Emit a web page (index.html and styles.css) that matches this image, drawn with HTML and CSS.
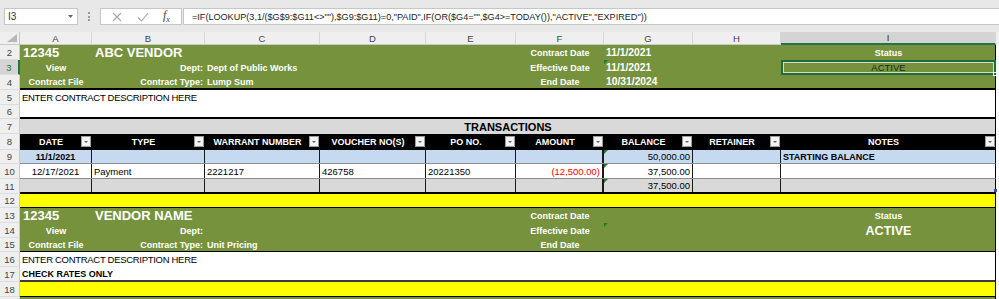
FILE: index.html
```html
<!DOCTYPE html>
<html lang="en">
<head>
    <meta charset="UTF-8">
    <title>Vendor Contracts</title>
    <link rel="stylesheet" href="styles.css">
</head>
<body>
    <div class="fbar">
        <div class="namebox">
            <span>I3</span>
            <svg width="5" height="3" viewBox="0 0 5 3"><path d="M0 0H5L2.5 3Z" fill="#666"/></svg>
        </div>
        <div class="grip"><i></i><i></i><i></i></div>
        <div class="fxbox">
            <svg width="10" height="10" viewBox="0 0 10 10"><path d="M1 1L9 9M9 1L1 9" stroke="#a3a3a3" stroke-width="1.1"/></svg>
            <svg width="12" height="10" viewBox="0 0 12 10"><path d="M1 5.5L4.5 9L11 1" stroke="#a3a3a3" stroke-width="1.1" fill="none"/></svg>
            <span class="fx"><i>f</i><sub>x</sub></span>
        </div>
        <div class="formula">=IF(LOOKUP(3,1/($G$9:$G11&lt;&gt;""),$G9:$G11)=0,"PAID",IF(OR($G4="",$G4&gt;=TODAY()),"ACTIVE","EXPIRED"))</div>
    </div>

    <div class="sheet">
        <div class="row colhead">
            <div class="corner"><span class="corner-tri"></span></div>
            <div class="cells">
                <div class="ch">A</div>
                <div class="ch">B</div>
                <div class="ch">C</div>
                <div class="ch">D</div>
                <div class="ch">E</div>
                <div class="ch">F</div>
                <div class="ch">G</div>
                <div class="ch">H</div>
                <div class="ch sel">I</div>
            </div>
        </div>

        <!-- contract 1 -->
        <div class="row h15">
            <div class="rh">2</div>
            <div class="cells green">
                <div class="c big">12345</div>
                <div class="c big">ABC VENDOR</div>
                <div class="c"></div>
                <div class="c"></div>
                <div class="c"></div>
                <div class="c ctr">Contract Date</div>
                <div class="c val">11/1/2021</div>
                <div class="c"></div>
                <div class="c ctr">Status</div>
            </div>
        </div>
        <div class="row h15">
            <div class="rh sel">3</div>
            <div class="cells green">
                <div class="c ctr">View</div>
                <div class="c r">Dept:</div>
                <div class="c">Dept of Public Works</div>
                <div class="c"></div>
                <div class="c"></div>
                <div class="c ctr">Effective Date</div>
                <div class="c val"><span class="flag"></span>11/1/2021</div>
                <div class="c"></div>
                <div class="c ctr selected">ACTIVE<span class="handle"></span></div>
            </div>
        </div>
        <div class="row h15">
            <div class="rh">4</div>
            <div class="cells green bottom2">
                <div class="c ctr">Contract File</div>
                <div class="c r">Contract Type:</div>
                <div class="c">Lump Sum</div>
                <div class="c"></div>
                <div class="c"></div>
                <div class="c ctr">End Date</div>
                <div class="c val">10/31/2024</div>
                <div class="c"></div>
                <div class="c"></div>
            </div>
        </div>
        <div class="row h15">
            <div class="rh">5</div>
            <div class="cells plain">
                <div class="c full desc">ENTER CONTRACT DESCRIPTION HERE</div>
            </div>
        </div>
        <div class="row h14">
            <div class="rh">6</div>
            <div class="cells plain bottom2"></div>
        </div>

        <!-- transactions -->
        <div class="row h15">
            <div class="rh">7</div>
            <div class="cells gray">
                <div class="c full ctr title">TRANSACTIONS</div>
            </div>
        </div>
        <div class="row h16">
            <div class="rh">8</div>
            <div class="cells thead">
                <div class="c ctr">DATE<span class="fbtn"></span></div>
                <div class="c ctr">TYPE<span class="fbtn"></span></div>
                <div class="c ctr">WARRANT NUMBER<span class="fbtn"></span></div>
                <div class="c ctr">VOUCHER NO(S)<span class="fbtn"></span></div>
                <div class="c ctr">PO NO.<span class="fbtn"></span></div>
                <div class="c ctr">AMOUNT<span class="fbtn"></span></div>
                <div class="c ctr">BALANCE<span class="fbtn"></span></div>
                <div class="c ctr">RETAINER<span class="fbtn"></span></div>
                <div class="c ctr">NOTES<span class="fbtn"></span></div>
            </div>
        </div>
        <div class="row h14">
            <div class="rh">9</div>
            <div class="cells tbl blue">
                <div class="c ctr strong">11/1/2021</div>
                <div class="c"></div>
                <div class="c"></div>
                <div class="c"></div>
                <div class="c"></div>
                <div class="c f"></div>
                <div class="c r"><span class="flag"></span>50,000.00</div>
                <div class="c"></div>
                <div class="c strong">STARTING BALANCE</div>
            </div>
        </div>
        <div class="row h15">
            <div class="rh">10</div>
            <div class="cells tbl">
                <div class="c ctr">12/17/2021</div>
                <div class="c">Payment</div>
                <div class="c">2221217</div>
                <div class="c">426758</div>
                <div class="c">20221350</div>
                <div class="c f r neg">(12,500.00)</div>
                <div class="c r"><span class="flag"></span>37,500.00</div>
                <div class="c"></div>
                <div class="c"></div>
            </div>
        </div>
        <div class="row h15">
            <div class="rh">11</div>
            <div class="cells tbl gray last">
                <div class="c"></div>
                <div class="c"></div>
                <div class="c"></div>
                <div class="c"></div>
                <div class="c"></div>
                <div class="c f"></div>
                <div class="c r"><span class="flag"></span>37,500.00</div>
                <div class="c"></div>
                <div class="c"><span class="resize"></span></div>
            </div>
        </div>
        <div class="row h14">
            <div class="rh">12</div>
            <div class="cells yellow"></div>
        </div>

        <!-- contract 2 -->
        <div class="row h15">
            <div class="rh">13</div>
            <div class="cells green">
                <div class="c big">12345</div>
                <div class="c big">VENDOR NAME</div>
                <div class="c"></div>
                <div class="c"></div>
                <div class="c"></div>
                <div class="c ctr">Contract Date</div>
                <div class="c val"></div>
                <div class="c"></div>
                <div class="c ctr">Status</div>
            </div>
        </div>
        <div class="row h15">
            <div class="rh">14</div>
            <div class="cells green">
                <div class="c ctr">View</div>
                <div class="c r">Dept:</div>
                <div class="c"></div>
                <div class="c"></div>
                <div class="c"></div>
                <div class="c ctr">Effective Date</div>
                <div class="c val"><span class="flag"></span></div>
                <div class="c"></div>
                <div class="c ctr status-big">ACTIVE</div>
            </div>
        </div>
        <div class="row h14">
            <div class="rh">15</div>
            <div class="cells green bottom1">
                <div class="c ctr">Contract File</div>
                <div class="c r">Contract Type:</div>
                <div class="c">Unit Pricing</div>
                <div class="c"></div>
                <div class="c"></div>
                <div class="c ctr">End Date</div>
                <div class="c val"></div>
                <div class="c"></div>
                <div class="c"></div>
            </div>
        </div>
        <div class="row h15">
            <div class="rh">16</div>
            <div class="cells plain">
                <div class="c full desc">ENTER CONTRACT DESCRIPTION HERE</div>
            </div>
        </div>
        <div class="row h15">
            <div class="rh">17</div>
            <div class="cells plain bottom-dark">
                <div class="c full strong">CHECK RATES ONLY</div>
            </div>
        </div>
        <div class="row h15">
            <div class="rh">18</div>
            <div class="cells yellow"></div>
        </div>
        <div class="row h15">
            <div class="rh"></div>
            <div class="cells green"></div>
        </div>
    </div>
</body>
</html>
```

FILE: styles.css
```css
* {
    margin: 0;
    padding: 0;
    box-sizing: border-box;
}

body {
    width: 999px;
    height: 299px;
    overflow: hidden;
    background: #fff;
    font-family: "Liberation Sans", Arial, sans-serif;
    font-size: 9.5px;
    color: #000;
}

/* formula bar */
.fbar {
    height: 32px;
    background: #e8e8e8;
    display: flex;
    align-items: flex-start;
    padding: 8px 0 0 4px;
}

.namebox {
    width: 74px;
    height: 17px;
    background: #fff;
    border: 1px solid #c6c6c6;
    display: flex;
    align-items: center;
    justify-content: space-between;
    padding: 0 4px 0 3px;
    font-size: 10px;
    color: #333;
}

.grip {
    width: 22px;
    height: 17px;
    display: flex;
    flex-direction: column;
    align-items: center;
    justify-content: center;
    gap: 1.5px;
}

.grip i {
    width: 2px;
    height: 2px;
    background: #9a9a9a;
}

.fxbox {
    width: 82px;
    height: 17px;
    background: #fff;
    border: 1px solid #c6c6c6;
    display: flex;
    align-items: center;
    justify-content: space-around;
    padding: 0 4px;
}

.fx {
    font-family: "Liberation Serif", serif;
    font-size: 12px;
    color: #444;
    line-height: 1;
}

.fx sub {
    font-size: 8px;
    font-style: italic;
}

.formula {
    flex: 1;
    height: 17px;
    margin-left: 1px;
    background: #fff;
    border: 1px solid #c6c6c6;
    border-right: none;
    padding-left: 8px;
    display: flex;
    align-items: center;
    font-size: 9.1px;
    color: #222;
    white-space: nowrap;
    overflow: hidden;
}

/* sheet */
.sheet {
    background: #fff;
}

.row {
    display: flex;
}

.h14 { height: 14px; }
.h15 { height: 15px; }
.h16 { height: 16px; }

.rh {
    width: 20px;
    flex-shrink: 0;
    background: #efefef;
    border-right: 1px solid #c9c9c9;
    border-bottom: 1px solid #dcdcdc;
    display: flex;
    align-items: center;
    justify-content: center;
    color: #444;
    font-size: 9.5px;
}

.rh.sel {
    background: #d4d4d4;
    color: #217346;
    border-right: 2px solid #217346;
}

.cells {
    width: 976px;
    flex-shrink: 0;
    display: grid;
    grid-template-columns: 72px 113px 115px 106px 90px 88px 89px 88px 215px;
    border-right: 1px solid #000;
}

.colhead {
    height: 13px;
    background: #efefef;
}

.colhead .cells {
    border-right: none;
    border-bottom: 1px solid #c9c9c9;
}

.corner {
    width: 20px;
    border-right: 1px solid #c9c9c9;
    border-bottom: 1px solid #c9c9c9;
    position: relative;
}

.corner-tri {
    position: absolute;
    right: 2px;
    bottom: 2px;
    width: 0;
    height: 0;
    border-left: 10px solid transparent;
    border-bottom: 8px solid #b8b8b8;
}

.ch {
    display: flex;
    align-items: center;
    justify-content: center;
    border-right: 1px solid #d6d6d6;
    color: #444;
    font-size: 9.5px;
}

.ch.sel {
    background: #d4d4d4;
    border-bottom: 2px solid #217346;
    color: #333;
}

.c {
    position: relative;
    display: flex;
    align-items: center;
    padding: 0 2px;
    white-space: nowrap;
    min-width: 0;
}

.c.ctr { justify-content: center; }
.c.r { justify-content: flex-end; }
.c.full { grid-column: 1 / -1; }

.strong { font-weight: bold; font-size: 9px; }
.desc { letter-spacing: -0.3px; }

/* green contract header */
.green {
    background: #76923c;
}

.green .c {
    color: #fff;
    font-weight: bold;
    font-size: 9px;
}

.green .c.big {
    font-size: 13px;
    padding-left: 3px;
}

.green .c.val {
    font-size: 10.3px;
}

.green .c.status-big {
    font-size: 12.5px;
}

.green .c.selected {
    color: #1c2a12;
    font-weight: normal;
    font-size: 9.5px;
    border: 2px solid #1e6b3e;
    box-shadow: inset 0 0 0 1px #d5e0c4;
}

.handle {
    position: absolute;
    right: -3px;
    bottom: -3px;
    width: 4px;
    height: 4px;
    background: #1e6b3e;
    border: 1px solid #fff;
}

.bottom2 { border-bottom: 2px solid #000; }
.bottom1 { border-bottom: 1px solid #000; }
.bottom-dark { border-bottom: 2px solid #3a3a3a; }

.plain { background: #fff; }
.gray { background: #d9d9d9; }
.yellow { background: #ffff00; border-bottom: 1px solid #000; }
.blue { background: #c5d9f1; }

.title {
    font-weight: bold;
    font-size: 11px;
}

/* table header */
.thead {
    background: #000;
}

.thead .c {
    color: #fff;
    font-weight: bold;
    font-size: 9px;
    padding-right: 12px;
}

.fbtn {
    position: absolute;
    right: 1px;
    top: 2px;
    width: 10px;
    height: 11px;
    background: #f3f3f3;
    border: 1px solid #9c9c9c;
}

.fbtn::after {
    content: "";
    position: absolute;
    left: 2px;
    top: 4px;
    border-left: 2.5px solid transparent;
    border-right: 2.5px solid transparent;
    border-top: 2.5px solid #666;
}

/* table body */
.tbl {
    border-bottom: 1px solid #8c8c8c;
}

.tbl.last {
    border-bottom: 2px solid #000;
}

.tbl .c {
    border-right: 1px solid #1a1a1a;
}

.tbl .c:last-child {
    border-right: none;
}

.tbl .c.f {
    border-right-width: 2px;
}

.neg {
    color: #ff0000;
}

.flag {
    position: absolute;
    top: 0;
    left: 0;
    width: 0;
    height: 0;
    border-top: 4px solid #1d7a30;
    border-right: 4px solid transparent;
}

.resize {
    position: absolute;
    right: -1px;
    bottom: 0;
    width: 3px;
    height: 3px;
    background: #2f56a8;
}
```
